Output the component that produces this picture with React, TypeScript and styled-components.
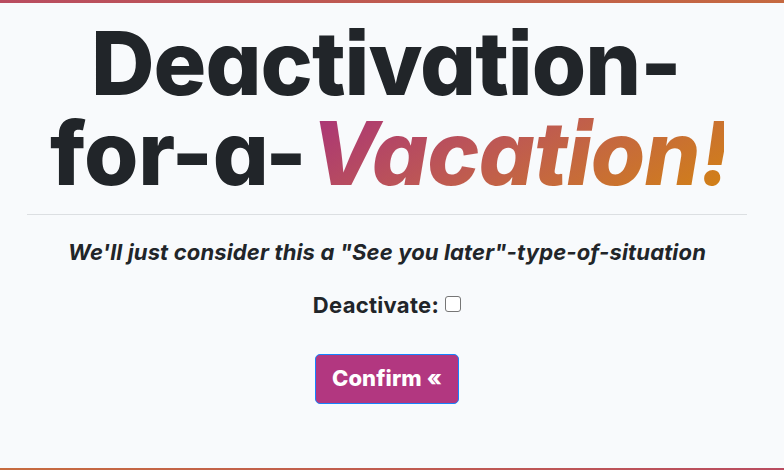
import React from "react";
import styled, { createGlobalStyle } from "styled-components";

const GlobalStyle = createGlobalStyle`
  * { box-sizing: border-box; }
  body {
    margin: 0;
    background: #f8fafc;
    color: #212529;
    font-family: Inter, "Open Sans", sans-serif;
    overflow: hidden;
  }
`;

const Page = styled.main`
  height: 470px;
  display: flex;
  flex-direction: column;
`;

const Bar = styled.div<{ $from: string; $to: string; $height: number }>`
  flex: none;
  height: ${(p) => p.$height}px;
  background: linear-gradient(90deg, ${(p) => p.$from}, ${(p) => p.$to});
`;

const Content = styled.section`
  flex: 1;
  width: 720px;
  margin-left: 27px;
  display: flex;
  flex-direction: column;
  align-items: center;
`;

const Title = styled.h1`
  width: 100%;
  height: 212px;
  margin: 0;
  padding-top: 15px;
  border-bottom: 1px solid #dcdfe2;
  font-size: 88px;
  line-height: 90px;
  font-weight: 800;
  font-feature-settings: "cv11" 1, "calt" 0, "ss07" 1;
  white-space: nowrap;
`;

const Line = styled.span<{ $left: number }>`
  display: flex;
  padding-left: ${(p) => p.$left}px;
`;

const Word = styled.span<{ $width: number; $spacing: number }>`
  width: ${(p) => p.$width}px;
  letter-spacing: ${(p) => p.$spacing}px;
`;

const Accent = styled.em`
  width: 413px;
  margin-left: -2px;
  overflow: hidden;
  letter-spacing: -0.9px;
  font-style: italic;
  color: transparent;
  background: linear-gradient(150deg, #a93279, #bd5755 42%, #c66a3c 65%, #d38312);
  background-clip: text;
  -webkit-background-clip: text;
`;

const RoundMark = styled.span`
  font-feature-settings: "ss07" 0;
`;

const Tagline = styled.p`
  margin: 23px 0 0;
  font-size: 22px;
  line-height: 28px;
  font-weight: 700;
  font-style: italic;
  letter-spacing: 0.14px;
  white-space: nowrap;
`;

const Field = styled.label`
  display: flex;
  align-items: center;
  margin-top: 25px;
  font-size: 22px;
  line-height: 28px;
  font-weight: 700;
  letter-spacing: 0.3px;
`;

const Checkbox = styled.input`
  appearance: none;
  width: 16px;
  height: 16px;
  margin: 0 0 3px 6px;
  border: 1px solid #767676;
  border-radius: 3px;
  background: #fff;
`;

const Confirm = styled.button`
  width: 144px;
  height: 50px;
  margin-top: 35px;
  padding: 0 0 2px;
  border: 1px solid #1683ff;
  border-radius: 5px;
  background: #b23780;
  color: #fff;
  font: 800 22px/28px Inter, "Open Sans", sans-serif;
  letter-spacing: 0.1px;
  white-space: nowrap;
`;

export default function App() {
  return (
    <Page>
      <GlobalStyle />
      <Bar $height={3} $from="#b94c60" $to="#c56940" />
      <Content>
        <Title>
          <Line $left={64}>
            <Word $width={600} $spacing={-1}>Deactivation-</Word>
          </Line>
          <Line $left={23}>
            <Word $width={263} $spacing={-0.4}>for-a-</Word>
            <Accent>Vacation<RoundMark>!</RoundMark></Accent>
          </Line>
        </Title>
        <Tagline>We'll just consider this a "See you later"-type-of-situation</Tagline>
        <Field>
          Deactivate:
          <Checkbox type="checkbox" />
        </Field>
        <Confirm type="button">Confirm «</Confirm>
      </Content>
      <Bar $height={2} $from="#c66b3f" $to="#b94c60" />
    </Page>
  );
}
